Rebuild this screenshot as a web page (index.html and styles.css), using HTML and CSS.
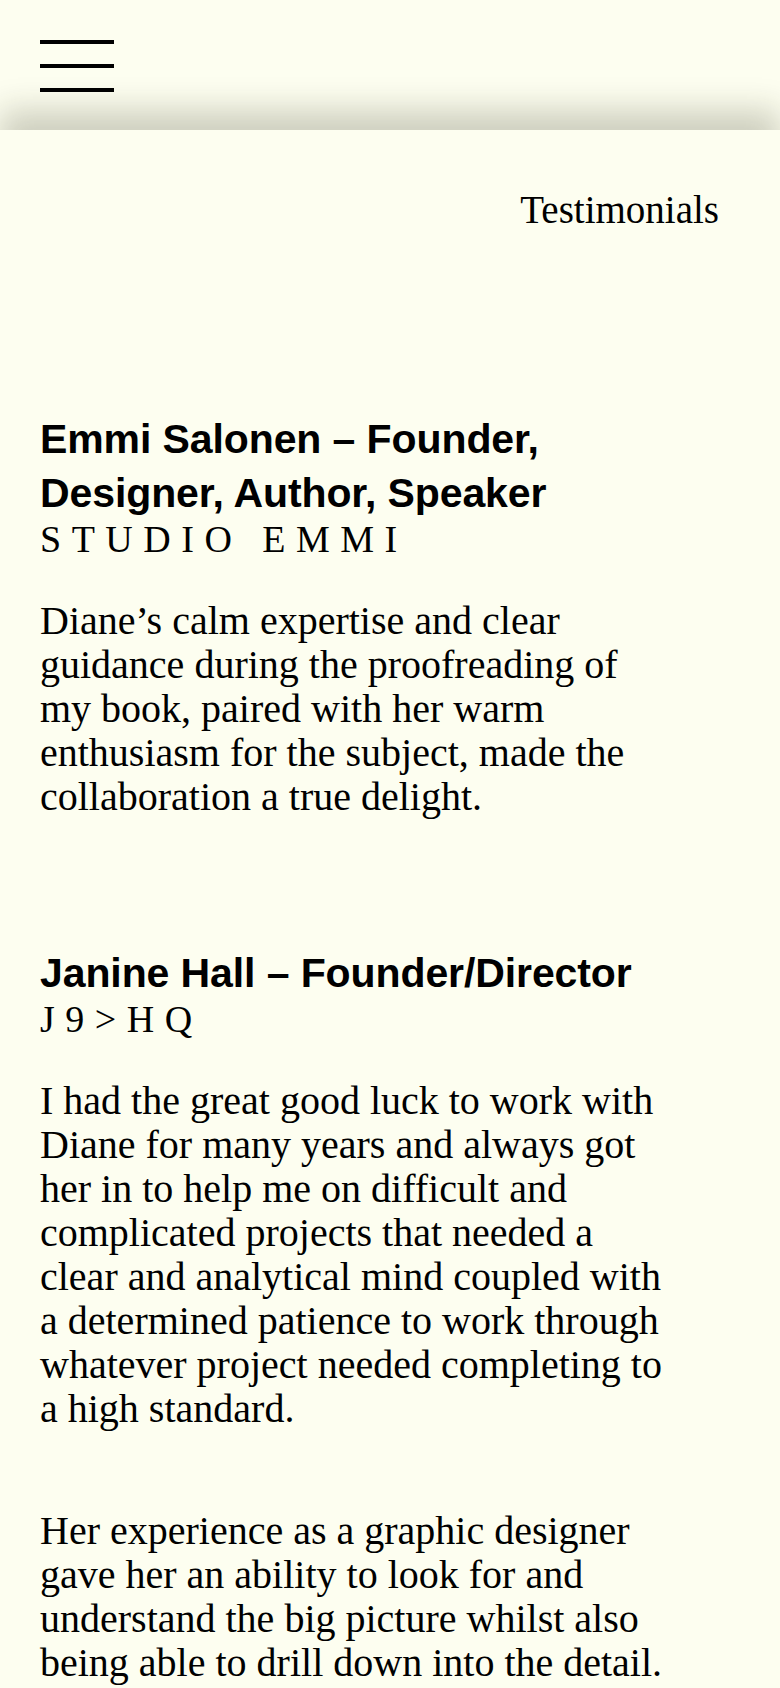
FILE: index.html
```html
<!DOCTYPE html>
<html lang="en">
<head>
<meta charset="utf-8">
<meta name="viewport" content="width=device-width, initial-scale=1">
<title>Testimonials</title>
<link rel="stylesheet" href="styles.css">
</head>
<body>
<header class="site-header">
  <button class="menu-btn" aria-label="Menu">
    <span class="bar"></span>
    <span class="bar"></span>
    <span class="bar"></span>
  </button>
</header>
<main class="content">
  <h1 class="page-title">Testimonials</h1>

  <section class="testimonial">
    <h2 class="name">Emmi Salonen – Founder, Designer, Author, Speaker</h2>
    <p class="company">STUDIO EMMI</p>
    <div class="quote">
      <p>Diane’s calm expertise and clear guidance during the proofreading of my book, paired with her warm enthusiasm for the subject, made the collaboration a true delight.</p>
    </div>
  </section>

  <section class="testimonial">
    <h2 class="name">Janine Hall – Founder/Director</h2>
    <p class="company">J9&gt;HQ</p>
    <div class="quote">
      <p>I had the great good luck to work with Diane for many years and always got her in to help me on difficult and complicated projects that needed a clear and analytical mind coupled with a determined patience to work through whatever project needed completing to a high standard.</p>
      <p>Her experience as a graphic designer gave her an ability to look for and understand the big picture whilst also being able to drill down into the detail.</p>
    </div>
  </section>
</main>
</body>
</html>
```

FILE: styles.css
```css
html, body {
  margin: 0;
  padding: 0;
  background: #fdfef0;
  color: #000;
}

body {
  font-family: "Liberation Serif", "Times New Roman", serif;
}

.site-header {
  height: 130px;
  background: #fdfef0;
  padding: 40px 0 0 40px;
  box-sizing: border-box;
}

.menu-btn {
  display: flex;
  flex-direction: column;
  gap: 20px;
  background: none;
  border: 0;
  padding: 0;
  margin: 0;
  cursor: pointer;
}

.bar {
  display: block;
  width: 74px;
  height: 4px;
  background: #000;
}

.content {
  background: #fdfef0;
  box-shadow: 0 -20px 30px rgba(40, 40, 20, 0.22);
  padding: 58px 61px 40px 40px;
  min-height: 1600px;
  box-sizing: border-box;
}

.page-title {
  margin: 0;
  font-family: "Liberation Serif", "Times New Roman", serif;
  font-weight: 400;
  font-size: 39px;
  line-height: 44px;
  text-align: right;
}

.testimonial {
  margin-top: 127px;
}

.testimonial:first-of-type {
  margin-top: 180px;
}

.name {
  margin: 0;
  max-width: 640px;
  font-family: "Liberation Sans", Arial, sans-serif;
  font-weight: 700;
  font-size: 41px;
  line-height: 54px;
  letter-spacing: -0.1px;
}

.company {
  margin: 1px 0 0;
  font-size: 38px;
  line-height: 36px;
  letter-spacing: 10.5px;
}

.quote {
  margin-top: 42px;
  max-width: 630px;
}

.quote p {
  margin: 0;
  font-size: 40px;
  line-height: 44px;
}

.quote p + p {
  margin-top: 78px;
}
```
